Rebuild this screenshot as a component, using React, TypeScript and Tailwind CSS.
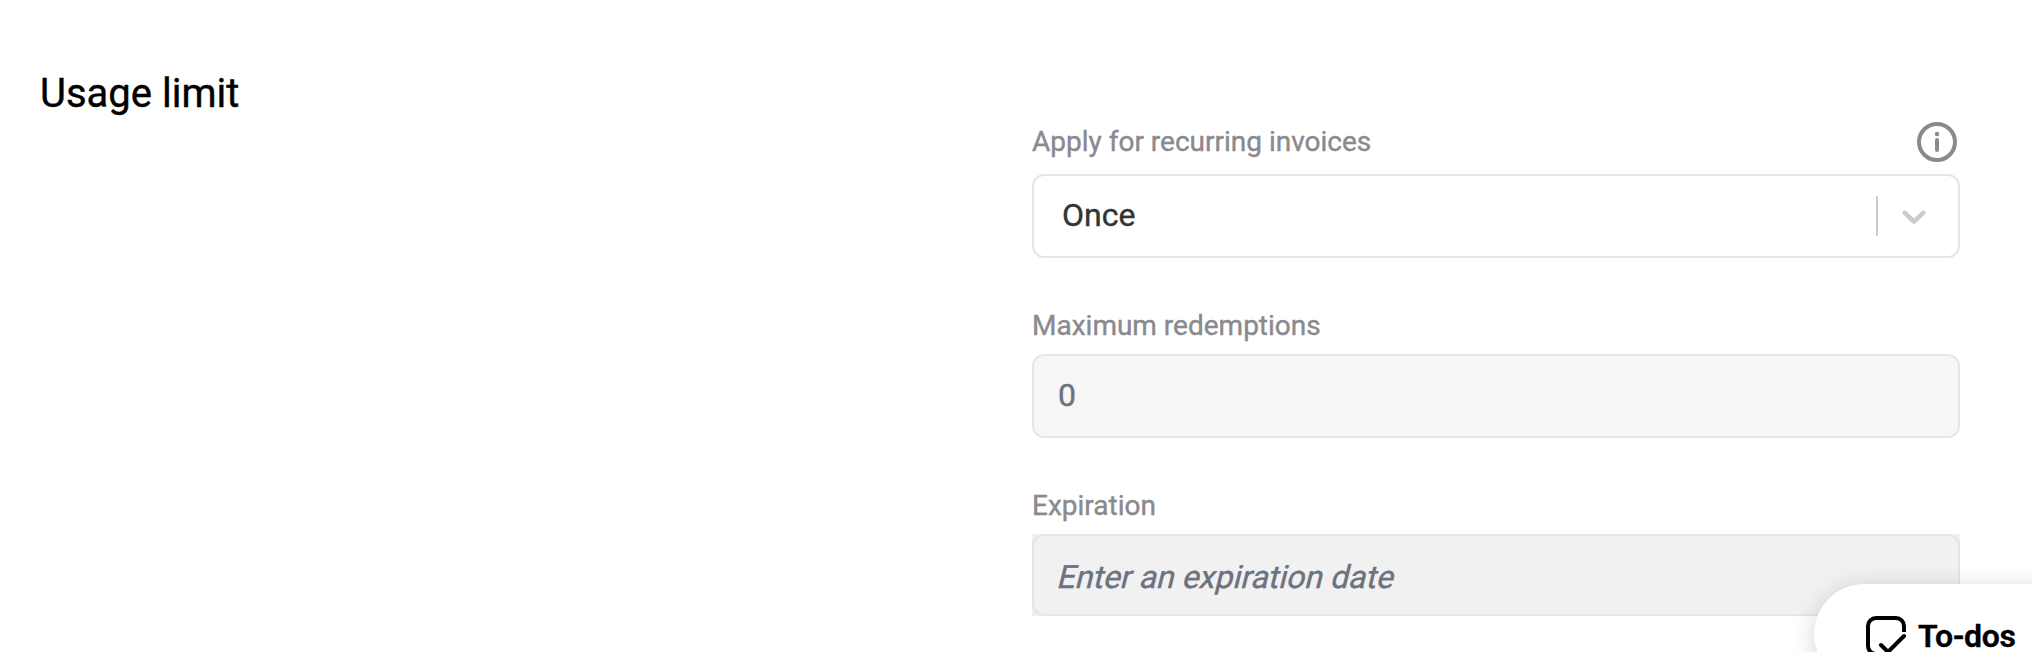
import React from 'react';

interface FieldProps {
    label: string;
    hasInfo?: boolean;
    children: React.ReactNode;
}

const Field: React.FC<FieldProps> = ({ label, hasInfo, children }) => (
    <div>
        <div className="flex h-[52px] items-start justify-between">
            <label className={`${hasInfo ? 'pt-[3px]' : 'pt-[7px]'} text-[28px] leading-[34px] text-[#8a8a8e]`}>{label}</label>
            {hasInfo && <InfoIcon />}
        </div>
        {children}
    </div>
);

const App = () => {
    return (
        <div className="relative h-[652px] w-[2032px] overflow-hidden bg-white font-['Roboto',sans-serif] [-webkit-text-stroke:0.4px]">
            <div className="flex justify-between pl-10 pr-[72px]">
                <h2 className="pt-[70px] text-[40px] leading-[48px] text-black">Usage limit</h2>

                <div className="flex w-[928px] flex-col pt-[122px]">
                    <Field label="Apply for recurring invoices" hasInfo>
                        <div className="flex h-[84px] items-center rounded-xl border-2 border-[#e5e5e5] bg-white pl-7 pr-6">
                            <span className="flex-1 pb-0.5 text-[32px] leading-10 text-[#333333]">Once</span>
                            <span className="h-10 w-0.5 bg-[#cccccc]"></span>
                            <ChevronIcon />
                        </div>
                    </Field>

                    <div className="pt-11">
                        <Field label="Maximum redemptions">
                            <div className="flex h-[84px] items-center rounded-xl border-2 border-[#e5e5e5] bg-[#f6f6f6] px-6 pb-0.5 text-[32px] leading-10 text-[#6b7280]">
                                0
                            </div>
                        </Field>
                    </div>

                    <div className="pt-11">
                        <Field label="Expiration">
                            <div className="bg-[#f1f1f1]">
                                <div className="flex h-[82px] items-center rounded-xl border-2 border-[#e5e5e5] px-[22px] pt-[3px] text-[32px] leading-10 text-[#6b7280]">
                                    <span className="origin-[left_78%] -skew-x-[14deg]">Enter an expiration date</span>
                                </div>
                            </div>
                        </Field>
                    </div>
                </div>
            </div>

            {/* Floating to-do launcher */}
            <div className="absolute left-[1814px] top-[584px] flex h-[100px] w-[300px] items-start rounded-[50px] bg-white pl-[52px] pt-8 shadow-[0_4px_24px_rgba(0,0,0,0.17)]">
                <TodoIcon />
                <span className="ml-3 text-[32px] font-semibold leading-10 tracking-[-0.01em] text-black">To-dos</span>
            </div>
        </div>
    );
};

const InfoIcon = () => (
    <svg className="mr-[3px] h-10 w-10 shrink-0" viewBox="0 0 40 40" fill="none">
        <circle cx="20" cy="20" r="18" stroke="#8a8a8e" strokeWidth="4" />
        <circle cx="20" cy="12" r="2.2" fill="#8a8a8e" />
        <path d="M20 18v10" stroke="#8a8a8e" strokeWidth="4" strokeLinecap="round" />
    </svg>
);

const ChevronIcon = () => (
    <svg className="ml-4 h-10 w-10 shrink-0" viewBox="0 0 20 20" fill="#cccccc">
        <path d="M4.516 7.548c0.436-0.446 1.043-0.481 1.576 0l3.908 3.747 3.908-3.747c0.533-0.481 1.141-0.446 1.574 0 0.436 0.445 0.408 1.197 0 1.615-0.406 0.418-4.695 4.502-4.695 4.502-0.217 0.223-0.502 0.335-0.787 0.335s-0.57-0.112-0.789-0.335c0 0-4.287-4.084-4.695-4.502s-0.436-1.17 0-1.615z" />
    </svg>
);

const TodoIcon = () => (
    <svg className="h-10 w-10 shrink-0" viewBox="0 0 40 40" fill="none" stroke="#000000" strokeWidth="4">
        <path d="M38 16v-6A8 8 0 0 0 30 2H10A8 8 0 0 0 2 10v20a8 8 0 0 0 8 8h3" />
        <path d="M15 29l7 7 16-16" strokeLinecap="round" strokeLinejoin="round" />
    </svg>
);

export default App;
